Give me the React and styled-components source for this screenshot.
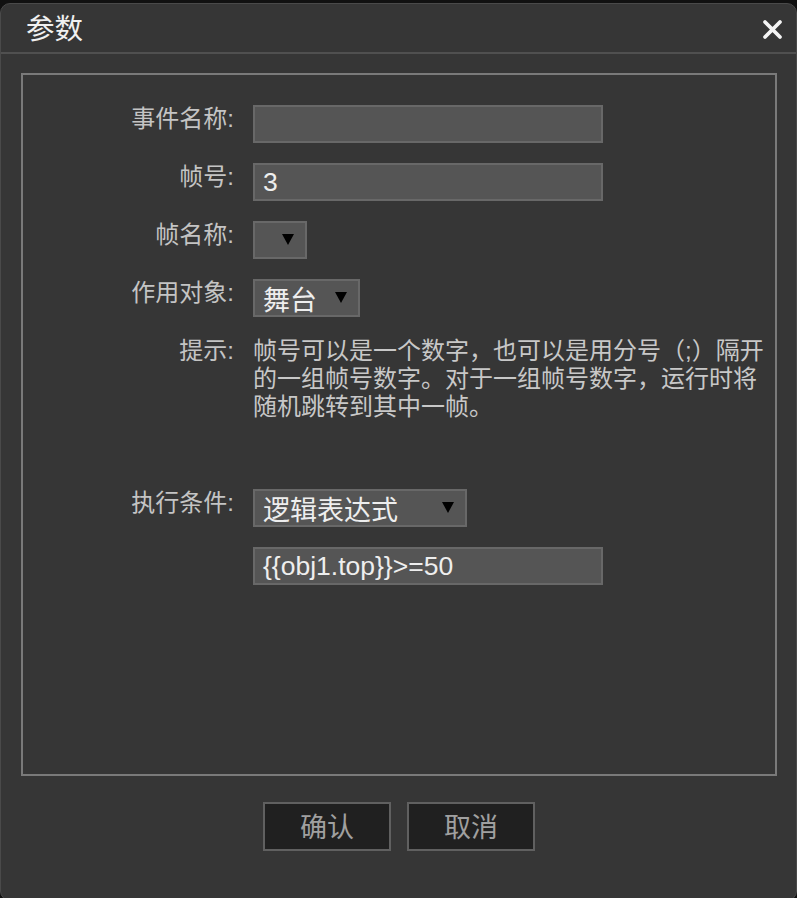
import React from "react";
import styled, { createGlobalStyle } from "styled-components";

const Global = createGlobalStyle`
  html, body { margin: 0; padding: 0; background: #111111; }
  body { font-family: "Liberation Sans", "Noto Sans CJK SC", sans-serif; }
  * { box-sizing: border-box; }
`;

const Page = styled.div`
  padding-top: 3px;
  height: 898px;
  overflow: hidden;
`;

const Dialog = styled.div`
  width: 797px;
  height: 898px;
  background: #363636;
  border: 1px solid #4a4a4a;
  border-radius: 10px;
  display: flex;
  flex-direction: column;
`;

const TitleBar = styled.div`
  height: 50px;
  border-bottom: 2px solid #505050;
  display: flex;
  align-items: center;
  justify-content: space-between;
  padding: 0 13px 0 25px;
`;

const Title = styled.div`
  font-size: 28.5px;
  color: #f0f0f0;
  line-height: 32px;
  margin-top: 2px;
`;

const Close = styled.button`
  background: none;
  border: none;
  padding: 0;
  width: 21px;
  height: 21px;
  display: flex;
  margin-top: 2px;
`;

const Body = styled.div`
  padding: 19px 19px 0 20px;
  display: flex;
  flex-direction: column;
  align-items: stretch;
`;

const Panel = styled.div`
  height: 703px;
  border: 2px solid #7a7a7a;
  padding-top: 30px;
  display: flex;
  flex-direction: column;
  gap: 20px;
`;

const Row = styled.div`
  display: grid;
  grid-template-columns: 211px 1fr;
  column-gap: 19px;
  align-items: start;
  padding-bottom: ${(p) => p.$extra || 0}px;
`;

const Label = styled.div`
  font-size: 24px;
  line-height: 28px;
  color: #c4c4c4;
  text-align: right;
  white-space: nowrap;
`;

const TextBox = styled.div`
  width: 350px;
  height: 38px;
  background: #555555;
  border: 2px solid #686868;
  padding-left: 8px;
  display: flex;
  align-items: center;
  font-size: 26.5px;
  color: #eeeeee;
  white-space: nowrap;
`;

const Select = styled.div`
  width: ${(p) => p.$w}px;
  height: 38px;
  background: #555555;
  border: 2px solid #686868;
  padding: 0 11px 0 8px;
  display: flex;
  align-items: center;
  justify-content: space-between;
  font-size: 27px;
  color: #eeeeee;
  white-space: nowrap;
`;

const Arrow = styled.svg`
  width: 12px;
  height: 11px;
  flex: none;
  margin-top: -2px;
`;

const Hint = styled.div`
  font-size: 24px;
  line-height: 28px;
  color: #c8c8c8;
  white-space: nowrap;
`;

const Buttons = styled.div`
  display: flex;
  justify-content: center;
  gap: 16px;
  margin-top: 26px;
`;

const Button = styled.button`
  width: 128px;
  height: 49px;
  background: #202020;
  border: 2px solid #606060;
  color: #a0a0a0;
  font-family: "Liberation Sans", "Noto Sans CJK SC", sans-serif;
  font-size: 27px;
  padding: 0 0 3px;
  display: flex;
  align-items: center;
  justify-content: center;
`;

const Dropdown = ({ w, children }) => (
  <Select $w={w}>
    <span>{children}</span>
    <Arrow viewBox="0 0 12 11">
      <polygon points="0,0 12,0 6,11" fill="#000" />
    </Arrow>
  </Select>
);

export default function App() {
  return (
    <Page>
      <Global />
      <Dialog>
        <TitleBar>
          <Title>参数</Title>
          <Close aria-label="close">
            <svg width="21" height="21" viewBox="0 0 21 21">
              <path d="M3 3 L18 18 M18 3 L3 18" stroke="#f4f4f4" strokeWidth="3.8" strokeLinecap="round" />
            </svg>
          </Close>
        </TitleBar>
        <Body>
          <Panel>
            <Row>
              <Label>事件名称:</Label>
              <TextBox />
            </Row>
            <Row>
              <Label>帧号:</Label>
              <TextBox>3</TextBox>
            </Row>
            <Row>
              <Label>帧名称:</Label>
              <Dropdown w={54} />
            </Row>
            <Row>
              <Label>作用对象:</Label>
              <Dropdown w={107}>舞台</Dropdown>
            </Row>
            <Row $extra={48}>
              <Label>提示:</Label>
              <Hint>
                帧号可以是一个数字，也可以是用分号（;）隔开
                <br />
                的一组帧号数字。对于一组帧号数字，运行时将
                <br />
                随机跳转到其中一帧。
              </Hint>
            </Row>
            <Row>
              <Label>执行条件:</Label>
              <Dropdown w={214}>逻辑表达式</Dropdown>
            </Row>
            <Row>
              <span />
              <TextBox>{"{{obj1.top}}>=50"}</TextBox>
            </Row>
          </Panel>
          <Buttons>
            <Button>确认</Button>
            <Button>取消</Button>
          </Buttons>
        </Body>
      </Dialog>
    </Page>
  );
}
